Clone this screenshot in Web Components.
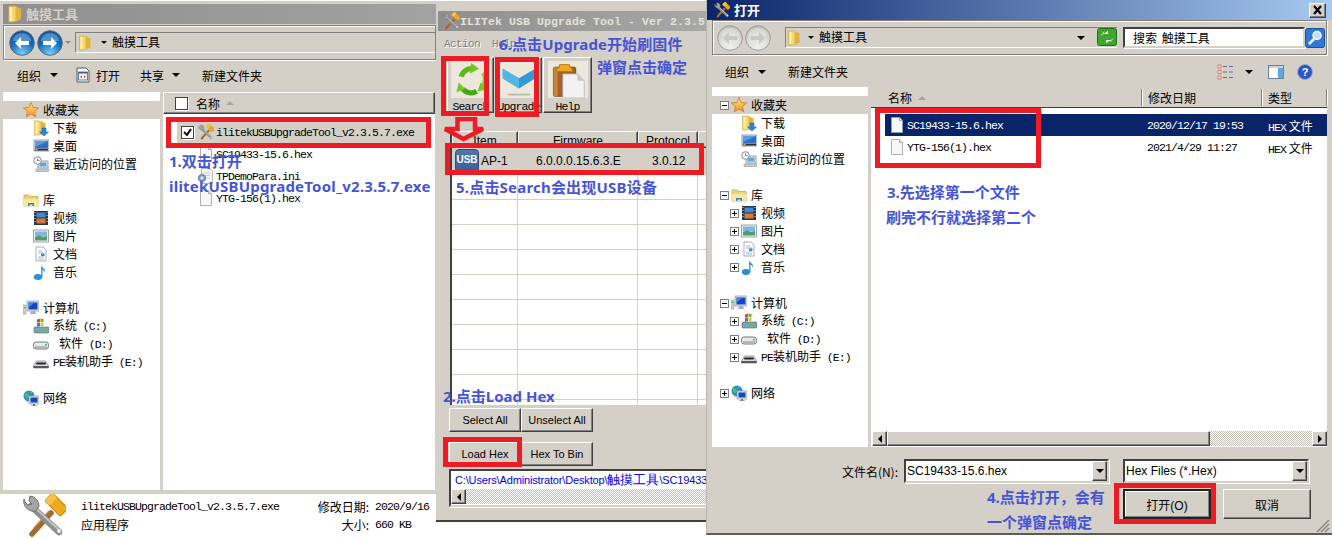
<!DOCTYPE html>
<html lang="zh">
<head>
<meta charset="utf-8">
<title>触摸工具</title>
<style>
  html, body { margin: 0; padding: 0; background: #fff; }
  body {
    position: relative;
    width: 1332px;
    height: 538px;
    overflow: hidden;
    font: 12px "Noto Sans CJK SC", "Liberation Sans", sans-serif;
    color: #000;
  }
</style>
</head>
<body>
<explorer-window></explorer-window>
<tool-window></tool-window>
<open-dialog></open-dialog>

<red-box x="166" y="117" w="265" h="31"></red-box>
<red-box x="441" y="56" w="48" h="60"></red-box>
<red-box x="495" y="57" w="44" h="60"></red-box>
<red-arrow></red-arrow>
<red-box x="445" y="143" w="259" h="32"></red-box>
<red-box x="443" y="437" w="79" h="30"></red-box>
<red-box x="875" y="108" w="166" h="60"></red-box>
<red-box x="1114" y="483" w="102" h="41"></red-box>

<step-note x="169" y="151">1.双击打开</step-note>
<step-note x="169" y="176" style="letter-spacing:.21px">ilitekUSBUpgradeTool_v2.3.5.7.exe</step-note>
<step-note x="443" y="386">2.点击Load Hex</step-note>
<step-note x="887" y="182">3.先选择第一个文件</step-note>
<step-note x="886" y="207">刷完不行就选择第二个</step-note>
<step-note x="987" y="487">4.点击打开，会有</step-note>
<step-note x="987" y="512">一个弹窗点确定</step-note>
<step-note x="456" y="177" style="letter-spacing:.2px">5.点击Search会出现USB设备</step-note>
<step-note x="499" y="34" style="letter-spacing:.1px">6.点击Upgrade开始刷固件</step-note>
<step-note x="597" y="57">弹窗点击确定</step-note>

<script>
// shared bits of style, every shadow root gets its own copy
const MONO = `.m { font-family: "Liberation Mono", monospace; font-size: 11.5px; letter-spacing: -0.9px; }`;
const RAISED = `background: #d4d0c8; box-sizing: border-box;
  border: 1px solid; border-color: #fff #404040 #404040 #fff; box-shadow: inset -1px -1px 0 #808080;`;
const INSET = `box-sizing: border-box; background: #fff; border: 2px solid; border-color: #404040 #d4d0c8 #d4d0c8 #404040; box-shadow: 1px 1px 0 #fff;`;
const ETCHED = `box-sizing: border-box; border: 1px solid #808080; box-shadow: inset 1px 1px 0 #fff, 1px 1px 0 #fff;`;

const FOLDER = `<g transform="translate(-1.500 0)"><path d="M3 1h6l2 1v12l-4 1H3z" fill="#f6d873" stroke="#c9a33c" stroke-width=".6"/><path d="M9 2l5 1v10l-5 1z" fill="#e2b23f"/><path d="M4 2h2v12H4z" fill="#fff0b0"/></g>`;
const SCREEN = `<rect x="1" y="2" width="15" height="11" fill="#dfe6ee" stroke="#7a8a9c" stroke-width=".8"/><rect x="2" y="3" width="13" height="7" fill="#2f6fc4"/><path d="M2 3h13L2 9z" fill="#5d9ae0"/><rect x="2" y="10.500" width="13" height="2" fill="#26303c"/><rect x="2.500" y="11" width="2" height="1" fill="#e8b23c"/>`;
const MONITOR = `<rect x="4" y="1" width="12" height="10" fill="#dfe3e8" stroke="#8a939e" stroke-width=".7"/><rect x="5.500" y="2.500" width="9" height="7" fill="#1746b8"/><path d="M5.500 2.500h6l-6 5z" fill="#4d86e8"/><path d="M8 11h4l1 3H7z" fill="#a9aeb4"/><rect x="0.500" y="5" width="2.500" height="9" fill="#c9ced4" stroke="#7f868d" stroke-width=".4"/><rect x="1" y="7" width="1.500" height="1" fill="#4ab04a"/>`;
const HAMMER = `<g transform="rotate(45 34 11)"><rect x="23" y="5" width="22" height="11" rx="2" fill="#f0a81c" stroke="#c47f10"/><rect x="23" y="5" width="7" height="11" rx="2" fill="#f7c24a"/></g>
  <path d="M10 40L29 19" stroke="#a5692c" stroke-width="5.500" stroke-linecap="round"/><path d="M12 34L27 17" stroke="#c98a44" stroke-width="1.500"/>
  <path d="M9 12L37 38" stroke="#8f8f8f" stroke-width="6.500" stroke-linecap="round"/><path d="M9 10L37 36" stroke="#c4c4c4" stroke-width="2"/>
  <path d="M2 5a10 10 0 0 0 12 12l3-5a10 10 0 0 0-9-10l-1 5 3 3-4 1-3-3z" fill="#a4a4a4" stroke="#6f6f6f"/><circle cx="37" cy="37" r="2" fill="#eee"/>`;

// 16x16 unless BIG says otherwise
const ICONS = {
  folder: FOLDER,
  star: `<defs><linearGradient id="s" x1="0" y1="0" x2="0" y2="1"><stop offset="0" stop-color="#ffe680"/><stop offset="1" stop-color="#f29420"/></linearGradient></defs><path d="M8 .500l2.200 5 5.300.5-4 3.500 1.200 5.300L8 12l-4.700 2.800 1.200-5.300-4-3.500 5.300-.5z" fill="url(#s)" stroke="#d2761c" stroke-width=".8"/>`,
  download: FOLDER + `<path d="M9 8h4v4h2.500L11 16l-4.500-4H9z" fill="#2b86d8" stroke="#17589c" stroke-width=".5"/>`,
  desktop: SCREEN,
  recent: `<rect x="5" y="5" width="10" height="7" fill="#e2ebf2" stroke="#7d8a94" stroke-width=".8"/><rect x="6.500" y="6.500" width="7" height="4" fill="#69a4d8"/><rect x="3" y="13" width="13" height="2.500" fill="#c6ccd2" stroke="#828a92" stroke-width=".5"/><circle cx="4.500" cy="4.500" r="3.800" fill="#f4f4f4" stroke="#8f8f8f"/><path d="M4.500 2.500v2h2" fill="none" stroke="#666" stroke-width=".8"/>`,
  library: `<path d="M1 3h5l1 1.500h8V14H1z" fill="#f2d372" stroke="#c29c3c" stroke-width=".7"/><path d="M1 7h14v7H1z" fill="#fae7a0"/><path d="M5 14v-3h6v3h-1.500v-1.500h-3V14z" fill="#2f86cc"/>`,
  video: `<rect x="1" y="1" width="14" height="14" fill="#2a3440"/><rect x="3.500" y="2.500" width="9" height="5" fill="#3f8ad4"/><rect x="3.500" y="8.500" width="9" height="5" fill="#d87a3a"/><path d="M1.500 2.500h1m-1 3h1m-1 3h1m-1 3h1m11-9h1m-1 3h1m-1 3h1m-1 3h1" stroke="#dfe6ee"/>`,
  picture: `<rect x="0.500" y="2" width="15" height="12" fill="#eef1f4" stroke="#87919c" stroke-width=".8"/><rect x="2" y="3.500" width="12" height="5" fill="#7fb6e8"/><path d="M2 12.500V9l4-1.500 4 1.500 4-1v4.500z" fill="#4f9c68"/>`,
  doc: `<path d="M3 1h7l3 3v11H3z" fill="#fff" stroke="#8d9aae" stroke-width=".8"/><path d="M5 5h4M5 7h6M5 11h6M5 13h6" stroke="#8fa4c8" stroke-width=".8"/><rect x="8" y="7.500" width="3.500" height="2.500" fill="#3f8ad4"/>`,
  music: `<ellipse cx="5" cy="13" rx="4.200" ry="3" fill="#2c8ed8"/><path d="M8.200 13V1c.5 3 4.800 3.500 3.800 8-.5-2.500-2-3-2.500-3.500V13z" fill="#2c8ed8"/>`,
  computer: MONITOR,
  sysdrive: `<rect x="1" y="9" width="15" height="6" rx="1" fill="#7ea4ac" stroke="#566c72" stroke-width=".6"/><rect x="12" y="11.500" width="2" height="1.500" fill="#4fc04f"/><path d="M4 1.500l3-1v3.500l-3 1z" fill="#e0492e"/><path d="M7.500 .5l3 .5v3.500l-3-.5z" fill="#6ab82e"/><path d="M4 5.500l3-1V8l-3 1z" fill="#2e7fe0"/><path d="M7.500 4.500l3 .5V8.500l-3-.5z" fill="#f2c22e"/>`,
  drive: `<rect x="0.500" y="6" width="15" height="7" rx="2.500" fill="#e6e8ea" stroke="#777c82"/><rect x="2" y="10" width="12" height="2" fill="#b4b8bd"/><rect x="12" y="8" width="2" height="1.500" fill="#4fc04f"/>`,
  removable: `<path d="M.5 12l3-5h9l3 5v2H.5z" fill="#d9dbde" stroke="#777c82" stroke-width=".7"/><rect x="3" y="8.500" width="10" height="2" rx="1" fill="#26282c"/><rect x="0.500" y="12" width="15" height="2" fill="#55585c"/>`,
  network: `<circle cx="6" cy="6" r="5.500" fill="#2c8ed8"/><path d="M2 3c2-1 3 1 4 2s-1 3-2 3-3-2-2-5zM7 1c2 0 3 1 2 2L7 3z" fill="#4cc04c"/><rect x="6" y="6" width="10" height="8" fill="#dfe3e8" stroke="#7b8794" stroke-width=".6"/><rect x="7.500" y="7.500" width="7" height="5" fill="#1746b8"/><path d="M10 14h2v1.500h2v.5H8v-.5h2z" fill="#6d7882"/>`,
  tools: HAMMER,
  hex: `<path d="M2.500 .5h8l3 3v12h-11z" fill="#f7f7f7" stroke="#9aa0a8" stroke-width=".8"/><path d="M10.500 .5v3h3" fill="#dcdfe2" stroke="#9aa0a8" stroke-width=".8"/>`,
  ini: `<path d="M3.500 .5h8l3 3v12h-11z" fill="#f7f7f7" stroke="#9aa0a8" stroke-width=".8"/><path d="M5 5h7M5 7.500h7M5 10h7" stroke="#b9bec6" stroke-width=".7"/><circle cx="4" cy="10" r="3.500" fill="#8daad4" stroke="#4f6c9c"/><circle cx="4" cy="10" r="1.200" fill="#fff"/>`,
  open: `<path d="M2 1h9l3 3v11H2z" fill="#fff" stroke="#555" stroke-width="1"/><rect x="3.500" y="5" width="9" height="8" fill="#f2f2f2" stroke="#3b5e9c" stroke-width=".8"/><rect x="3.500" y="5" width="9" height="1.500" fill="#3b5e9c"/><path d="M5 10l2-1.500V11zM11 10L9 8.500V11z" fill="#c23b2e"/>`,
  recycle: `<g fill="none" stroke-width="6.500"><path d="M9 17a13 13 0 0 1 14-10" stroke="#5cb81e"/><path d="M36 12a13 13 0 0 1-1 17" stroke="#8ed42c"/><path d="M28 35a13 13 0 0 1-17-3" stroke="#4aa614"/></g><path d="M21 0l10 7-11 6zM41 33l-12 2 4-11zM3 36l3-12 8 8z" fill="#76c622"/>`,
  chevron: `<path d="M2 8l19 11 19-11v11L21 31 2 19z" fill="#2f9ad6"/><path d="M2 8l19 11v12L2 19z" fill="#56b4e4"/><rect x="8" y="37" width="26" height="2" fill="#b9b9b0"/>`,
  clipboard: `<rect x="4" y="6" width="26" height="34" rx="2" fill="#a4622a" stroke="#6f4016"/><rect x="4" y="6" width="5" height="34" fill="#c4843c"/><path d="M11 3h12v3l3 2v3H8V8l3-2z" fill="#f0a81c" stroke="#b87a10"/><path d="M15 14h17l8 8v20H15z" fill="#f2f2f2" stroke="#b9b9b9"/><path d="M32 14v8h8z" fill="#c8c8c8"/>`,
  refresh: `<rect x=".5" y=".5" width="19" height="17" rx="2" fill="#3fa62e" stroke="#1f6e18"/><path d="M3 8l4-4v2h4V3zM17 10l-4 4v-2H9v3z" fill="#fff"/>`,
  lens: `<rect x=".5" y=".5" width="19" height="19" rx="2" fill="#2f78d8" stroke="#1b4e9c"/><circle cx="12" cy="7.500" r="4" fill="#bcdcf8" stroke="#fff" stroke-width="1.500"/><path d="M9 11l-5 5" stroke="#fff" stroke-width="2.500"/>`,
  views: `<path d="M1 1h3v3H1zM1 6.500h3v3H1zM1 12h3v3H1z" fill="#fff" stroke="#c24a3a" stroke-width=".7"/><path d="M6 2.500h4M6 8h4M6 13.500h4M12 2.500h4M12 8h4M12 13.500h4" stroke="#5a7296" stroke-width="1.200"/>`,
  pane: `<rect x=".5" y="1.500" width="15" height="13" fill="#fff" stroke="#6d8098"/><rect x="10" y="2" width="5" height="12" fill="#5fa8d8"/><rect x="1" y="2" width="14" height="2" fill="#c9d6e2"/>`,
  help: `<circle cx="8" cy="8" r="7.500" fill="#2c56c8" stroke="#9aa8c4"/><text x="8" y="12" font-size="11" font-weight="700" font-family="Liberation Sans" text-anchor="middle" fill="#fff">?</text>`
};
const BIG = { tools: 44, recycle: 42, chevron: 42, clipboard: 42, refresh: 20, lens: 20 };

class WinIcon extends HTMLElement {
  connectedCallback() {
    const name = this.getAttribute('name');
    const size = this.getAttribute('size') || 16;
    const box = BIG[name] || 16;
    this.attachShadow({ mode: 'open' }).innerHTML = `
      <style>:host { display: inline-block; flex: none; width: ${size}px; height: ${size}px; line-height: 0; }</style>
      <svg width="${size}" height="${size}" viewBox="0 0 ${box} ${box}">${ICONS[name] || ''}</svg>`;
  }
}
customElements.define('win-icon', WinIcon);

class RedBox extends HTMLElement {
  connectedCallback() {
    const a = n => this.getAttribute(n);
    this.attachShadow({ mode: 'open' }).innerHTML = `
      <style>:host { position: absolute; left: ${a('x')}px; top: ${a('y')}px; width: ${a('w')}px; height: ${a('h')}px;
        box-sizing: border-box; border: 5px solid #ed1c24; }</style>`;
  }
}
customElements.define('red-box', RedBox);

class RedArrow extends HTMLElement {
  constructor() {
    super();
    this.attachShadow({ mode: 'open' }).innerHTML = `
      <style>:host { position: absolute; left: 440px; top: 117px; width: 48px; height: 26px; line-height: 0; }</style>
      <svg width="48" height="26"><path d="M17.500 2H35V12H43L23.500 22 5 12H17.500Z" fill="none" stroke="#ed1c24" stroke-width="4.500"/></svg>`;
  }
}
customElements.define('red-arrow', RedArrow);

class StepNote extends HTMLElement {
  connectedCallback() {
    this.attachShadow({ mode: 'open' }).innerHTML = `
      <style>:host { position: absolute; left: ${this.getAttribute('x')}px; top: ${this.getAttribute('y')}px;
        font: 700 15px/20px "Noto Sans", "Noto Sans CJK SC", sans-serif; color: #4654d8; white-space: nowrap; }</style>
      <slot></slot>`;
  }
}
customElements.define('step-note', StepNote);

class RaisedBtn extends HTMLElement {
  constructor() {
    super();
    this.attachShadow({ mode: 'open' }).innerHTML = `
      <style>:host { ${RAISED} display: flex; align-items: center; justify-content: center; overflow: hidden; white-space: nowrap; }
      :host([default]) { border: 2px solid #222; box-shadow: inset -1px -1px 0 #808080, inset 1px 1px 0 #fff; }</style>
      <slot></slot>`;
  }
}
customElements.define('raised-btn', RaisedBtn);

class NavOrb extends HTMLElement {
  connectedCallback() {
    const off = this.hasAttribute('off');
    const flip = this.getAttribute('dir') === 'next' ? 'matrix(-1 0 0 1 26 0)' : '';
    const [a, b] = off ? ['#f2f2f0', '#bdbdb8'] : ['#7fd0f4', '#0a4f9c'];
    const ink = off ? '#c8c8c4' : '#fff';
    this.attachShadow({ mode: 'open' }).innerHTML = `
      <style>:host { display: block; flex: none; width: 26px; height: 26px; line-height: 0; }</style>
      <svg width="26" height="26" viewBox="0 0 26 26">
        <defs><radialGradient id="o" cx=".5" cy=".95" r=".95"><stop offset="0" stop-color="${a}"/><stop offset=".55" stop-color="${off ? '#dcdcd8' : '#1470c0'}"/><stop offset="1" stop-color="${b}"/></radialGradient></defs>
        <circle cx="13" cy="13" r="12.300" fill="url(#o)" stroke="${off ? '#9a9a96' : '#596a7c'}"/>
        <path d="M4 11a9 8 0 0 1 18 0z" fill="#fff" opacity=".28"/>
        <path transform="${flip}" d="M6 13l6-6v4h8v4h-8v4z" fill="${ink}"/>
      </svg>`;
  }
}
customElements.define('nav-orb', NavOrb);

const TREE = [
  { i: 'star', t: '收藏夹', x: '-', hl: 1 },
  { i: 'download', t: '下载', c: 1 },
  { i: 'desktop', t: '桌面', c: 1 },
  { i: 'recent', t: '最近访问的位置', c: 1 },
  { i: 'library', t: '库', x: '-', gap: 1 },
  { i: 'video', t: '视频', c: 1, x: '+' },
  { i: 'picture', t: '图片', c: 1, x: '+' },
  { i: 'doc', t: '文档', c: 1, x: '+' },
  { i: 'music', t: '音乐', c: 1, x: '+' },
  { i: 'computer', t: '计算机', x: '-', gap: 1 },
  { i: 'sysdrive', t: '系统 <span class="m drv">(C:)</span>', c: 1, x: '+' },
  { i: 'drive', t: '<span class="sp">软件</span> <span class="m drv">(D:)</span>', c: 1, x: '+' },
  { i: 'removable', t: '<span class="m">PE</span>装机助手 <span class="m drv">(E:)</span>', c: 1, x: '+' },
  { i: 'network', t: '网络', x: '+', gap: 1 }
];

class NavTree extends HTMLElement {
  connectedCallback() {
    const boxes = this.hasAttribute('expanders');
    const rows = TREE.map(r => {
      const box = boxes
        ? `<span class="x ${r.x ? '' : 'none'}">${r.x === '+' ? '<i class="v"></i>' : ''}<i class="h"></i></span>`
        : '';
      const pad = (r.c ? 10 : 0) + (boxes ? 8 : 20);
      return `<div class="row ${r.hl ? 'hl' : ''} ${r.gap ? 'gap' : ''}" style="padding-left:${pad}px">${box}
        <win-icon name="${r.i}" size="16"></win-icon><span class="t">${r.t}</span></div>`;
    }).join('');
    this.attachShadow({ mode: 'open' }).innerHTML = `
      <style>
        :host { display: block; background: #fff; padding-top: 9px; overflow: hidden; }
        ${MONO}
        .row { display: flex; align-items: center; height: 18px; white-space: nowrap; }
        .hl { background: #d4d0c8; }
        .gap { margin-top: 18px; }
        .t { margin-left: 4px; line-height: 18px; }
        .drv { margin-left: 3px; }
        .sp { margin-left: 6px; }
        .x { position: relative; box-sizing: border-box; flex: none; width: 9px; height: 9px; margin-right: 2px; border: 1px solid #808080; background: #fff; }
        .x.none { visibility: hidden; }
        .x i { position: absolute; background: #000; }
        .x .h { left: 1px; top: 3px; width: 5px; height: 1px; }
        .x .v { left: 3px; top: 1px; width: 1px; height: 5px; }
      </style>${rows}`;
  }
}
customElements.define('nav-tree', NavTree);

class ScrollBar extends HTMLElement {
  connectedCallback() {
    const thumb = this.getAttribute('thumb');
    this.attachShadow({ mode: 'open' }).innerHTML = `
      <style>
        :host { display: flex; flex: none; height: 15px; background: repeating-conic-gradient(#c4c0b8 0 25%, #fff 0 50%) 0 0 / 2px 2px; overflow: hidden; }
        .b { ${RAISED} flex: none; width: 15px; display: flex; align-items: center; justify-content: center; }
        .thumb { ${RAISED} flex: none; width: ${thumb}px; }
        .fill { flex: 1; }
        i { width: 0; height: 0; border: 4px solid transparent; }
        .l i { border-right-color: #000; border-left: 0; }
        .r i { border-left-color: #000; border-right: 0; }
      </style>
      <div class="b l"><i></i></div>
      ${thumb ? '<div class="thumb"></div><div class="fill"></div><div class="b r"><i></i></div>' : ''}`;
  }
}
customElements.define('scroll-bar', ScrollBar);

class ComboField extends HTMLElement {
  constructor() {
    super();
    this.attachShadow({ mode: 'open' }).innerHTML = `
      <style>
        :host { ${INSET} display: flex; align-items: center; height: 24px; font: 12px "Liberation Sans", sans-serif; }
        .v { flex: 1; padding-left: 1px; white-space: nowrap; overflow: hidden; }
        .b { ${RAISED} width: 15px; height: 20px; display: flex; align-items: center; justify-content: center; }
        i { border: 4px solid transparent; border-top-color: #000; border-bottom: 0; }
      </style>
      <div class="v"><slot></slot></div><div class="b"><i></i></div>`;
  }
}
customElements.define('combo-field', ComboField);

const WIN_CSS = `
  ${MONO}
  .title { display: flex; align-items: center; box-sizing: border-box; height: 20px; font-weight: 700; font-size: 13px; color: #d4d0c8; white-space: nowrap; overflow: hidden; }
  .up { padding-bottom: 2px; }
  .strip { ${ETCHED} display: flex; align-items: center; height: 35px; }
  .addr { display: flex; align-items: center; height: 21px; border-top: 1px solid #808080; border-left: 1px solid #808080; border-bottom: 1px solid #fff; box-sizing: border-box; }
  .tri { flex: none; border: 4px solid transparent; border-top-color: #000; border-bottom: 0; }
  .tri.s { border-width: 3px; border-bottom: 0; }
  .bar { display: flex; align-items: center; height: 31px; white-space: nowrap; }
  .head { ${RAISED} display: flex; align-items: center; height: 22px; flex: none; }
  .sort { border: 4px solid transparent; border-bottom-color: #a8a49c; border-top: 0; }
`;

class ExplorerWindow extends HTMLElement {
  constructor() {
    super();
    this.attachShadow({ mode: 'open' }).innerHTML = `
      <style>
        ${WIN_CSS}
        :host { position: absolute; left: 0; top: 0; width: 706px; height: 538px; box-sizing: border-box; background: #d4d0c8;
          display: flex; flex-direction: column; padding: 3px 270px 0 3px; border-top: 1px solid #fff; }
        .title { flex: none; background: linear-gradient(90deg, #8f8f8f, #a2a2a2); padding-left: 4px; }
        .title span { margin-left: 1px; }
        .strip { flex: none; margin-top: 1px; padding-left: 5px; }
        .addr { flex: 1; margin-left: 4px; padding-left: 2px; align-self: center; }
        .bar { flex: none; height: 32px; padding-bottom: 2px; box-sizing: border-box; }
        .bar > * { flex: none; }
        .panes { flex: 1; display: grid; grid-template-columns: 157px 1fr; column-gap: 3px; min-height: 0; padding-right: 1px; }
        .list { background: #fff; min-width: 0; }
        .file { display: flex; align-items: center; height: 22px; padding-left: 35px; white-space: nowrap; }
        .file .m { margin-left: 2px; }
        .file.sel { background: #d4d0c8; margin: 7px 0 0 14px; padding-left: 4px; width: 254px; box-sizing: border-box; }
        .chk { ${INSET} flex: none; width: 13px; height: 13px; border-width: 1px; border-color: #404040; margin-right: 4px; display: block; line-height: 0; }
        .status { flex: none; display: flex; height: 44px; margin: 4px -270px 0 -3px; background: #fff; }
        .status .tx { display: grid; grid-template-columns: 236px 52px auto; align-content: start; margin: 4px 0 0 15px; line-height: 18px; white-space: nowrap; }
        .status .r { text-align: right; }
        .status .d { margin-left: 6px; }
      </style>
      <div class="title"><win-icon name="folder" size="18"></win-icon><span class="up">触摸工具</span></div>
      <div class="strip">
        <nav-orb dir="prev"></nav-orb><nav-orb dir="next" style="margin-left:2px"></nav-orb>
        <div class="tri s" style="border-top-color:#888;margin-left:2px"></div>
        <div class="addr"><win-icon name="folder" size="16"></win-icon><div class="tri s" style="margin:0 5px 0 7px"></div><span class="up">触摸工具</span></div>
      </div>
      <div class="bar">
        <span style="margin-left:14px">组织</span><div class="tri" style="margin-left:9px"></div>
        <win-icon name="open" size="16" style="margin-left:17px"></win-icon><span style="margin-left:5px">打开</span>
        <span style="margin-left:20px">共享</span><div class="tri" style="margin-left:8px"></div>
        <span style="margin-left:22px">新建文件夹</span>
      </div>
      <div class="panes">
        <nav-tree></nav-tree>
        <div class="list">
          <div class="head" style="padding-left:11px">
            <span class="chk"></span><span style="margin-left:4px">名称</span><div class="sort" style="margin-left:6px"></div>
          </div>
          <div class="file sel">
            <span class="chk"><svg width="11" height="11"><path d="M2 5l3 3 4-6" fill="none" stroke="#000" stroke-width="2"/></svg></span>
            <win-icon name="tools" size="16"></win-icon><span class="m">ilitekUSBUpgradeTool_v2.3.5.7.exe</span>
          </div>
          <div class="file"><win-icon name="hex" size="16"></win-icon><span class="m">SC19433-15.6.hex</span></div>
          <div class="file"><win-icon name="ini" size="16"></win-icon><span class="m">TPDemoPara.ini</span></div>
          <div class="file"><win-icon name="hex" size="16"></win-icon><span class="m">YTG-156(1).hex</span></div>
        </div>
      </div>
      <div class="status">
        <win-icon name="tools" size="44" style="margin-left:22px"></win-icon>
        <div class="tx">
          <span class="m">ilitekUSBUpgradeTool_v2.3.5.7.exe</span><span class="r">修改日期:</span><span class="m d">2020/9/16</span>
          <span>应用程序</span><span class="r">大小:</span><span class="m d">660 KB</span>
        </div>
      </div>`;
  }
}
customElements.define('explorer-window', ExplorerWindow);

class ToolWindow extends HTMLElement {
  constructor() {
    super();
    const row = '<div class="c"></div><div class="c"></div><div class="c"></div><div class="c"></div>';
    this.attachShadow({ mode: 'open' }).innerHTML = `
      <style>
        ${WIN_CSS}
        :host { position: absolute; left: 436px; top: 10px; width: 270px; height: 512px; box-sizing: border-box; background: #d4d0c8;
          padding: 1px 0 0 2px; border-bottom: 2px solid #404040; overflow: hidden; display: flex; flex-direction: column;
          font: 11px "Liberation Sans", sans-serif; }
        .title { flex: none; background: linear-gradient(90deg, #8f8f8f, #a8a8a8); padding-left: 4px; }
        .title .m { font-weight: 700; font-size: 11.500px; letter-spacing: .1px; color: #e4e1da; }
        .menu { display: flex; flex: none; height: 26px; align-items: center; padding-left: 6px; color: #808080; text-shadow: 1px 1px 0 #fff; }
        .menu .m { font-size: 11px; letter-spacing: -.6px; }
        .tools { display: flex; flex: none; gap: 1px; height: 56px; margin-left: 9px; }
        .tb { ${RAISED} width: 47px; height: 56px; display: flex; flex-direction: column; align-items: center; overflow: hidden; padding-top: 3px; }
        .tb .pic { flex: none; width: 40px; height: 37px; background: #ece8dc; display: flex; align-items: center; justify-content: center; }
        .tb .m { margin-top: 2px; line-height: 13px; white-space: nowrap; }
        .grid { flex: none; display: grid; grid-template-columns: 66px 120px 60px 10px; grid-template-rows: 17px 27px repeat(10, 25px); height: 274px;
          margin: 18px 0 0 12px; background: #fff; border-left: 2px solid #404040; box-sizing: border-box; overflow: hidden; font-size: 12px; }
        .h { ${RAISED} text-align: center; line-height: 14px; padding-top: 2px; overflow: hidden; }
        .c { box-sizing: border-box; border-right: 1px solid #d4d0c8; border-bottom: 1px solid #d4d0c8; white-space: nowrap; }
        .cur { background: #d4d0c8; display: flex; align-items: center; }
        .btns { display: grid; flex: none; grid-template-columns: 72px 72px; margin-left: 11px; }
        .btns raised-btn { height: 24px; }
        .path { ${INSET} flex: none; display: flex; flex-direction: column; margin: 3px 0 0 11px; height: 38px; border-right: 0; overflow: hidden; }
        .path .p { flex: none; color: #0000f0; font-size: 11px; letter-spacing: -.15px; line-height: 18px; padding: 0 0 0 4px; white-space: nowrap; }
        .path span { font-size: 12.500px; letter-spacing: 0; }
        .usb { width: 24px; height: 24px; margin-left: 3px; flex: none; border-radius: 4px; border: 1px solid #2d4f80; box-sizing: border-box;
          background: linear-gradient(#4f76ac, #3a5f94); color: #fff; font: 700 10px/19px "Liberation Sans", sans-serif; text-align: center; }
      </style>
      <div class="title"><win-icon name="tools" size="18"></win-icon><span class="m">ILITek USB Upgrade Tool - Ver 2.3.5</span></div>
      <div class="menu"><span class="m">Action</span><span class="m" style="margin-left:12px">Help</span></div>
      <div class="tools">
        <div class="tb"><div class="pic"><win-icon name="recycle" size="34"></win-icon></div><span class="m">Search</span></div>
        <div class="tb"><div class="pic"><win-icon name="chevron" size="36"></win-icon></div><span class="m">Upgrade</span></div>
        <div class="tb" style="width:49px"><div class="pic"><win-icon name="clipboard" size="36"></win-icon></div><span class="m">Help</span></div>
      </div>
      <div class="grid">
        <div class="h">Item</div><div class="h">Firmware</div><div class="h">Protocol</div><div class="h"></div>
        <div class="c cur"><div class="usb">USB</div><span style="margin-left:2px">AP-1</span></div>
        <div class="c cur" style="padding-left:18px">6.0.0.0.15.6.3.E</div>
        <div class="c cur" style="padding-left:14px">3.0.12</div>
        <div class="c cur"></div>
        ${row.repeat(10)}
      </div>
      <div class="btns" style="margin-top:3px"><raised-btn>Select All</raised-btn><raised-btn>Unselect All</raised-btn></div>
      <div class="btns" style="margin-top:10px"><raised-btn>Load Hex</raised-btn><raised-btn>Hex To Bin</raised-btn></div>
      <div class="path"><div class="p">C:\\Users\\Administrator\\Desktop\\<span>触摸工具</span>\\SC19433</div><scroll-bar></scroll-bar></div>`;
  }
}
customElements.define('tool-window', ToolWindow);

class OpenDialog extends HTMLElement {
  constructor() {
    super();
    this.attachShadow({ mode: 'open' }).innerHTML = `
      <style>
        ${WIN_CSS}
        :host { position: absolute; left: 706px; top: 0; width: 626px; height: 535px; box-sizing: border-box; background: #d4d0c8;
          padding: 0 5px 0 5px; border-bottom: 2px solid #5c5c5c; border-left: 1px solid #b8b5ae; display: flex; flex-direction: column; }
        .title { flex: none; background: linear-gradient(90deg, #0a246a, #a6caf0); margin: 0 -5px; padding-left: 7px; color: #fff; height: 20px; }
        .title span { margin-left: 4px; flex: 1; }
        .close { ${RAISED} width: 17px; height: 15px; margin-right: 6px; display: flex; align-items: center; justify-content: center; line-height: 0; }
        .strip { padding-left: 4px; flex: none; }
        .addr { margin-left: 14px; width: 332px; padding-left: 1px; flex: none; }
        .search { ${INSET} display: flex; align-items: center; width: 182px; height: 21px; margin-left: 6px; padding-left: 8px; word-spacing: 2px; }
        .bar { flex: none; }
        .panes { flex: none; height: 360px; display: grid; grid-template-columns: 156px 1fr; column-gap: 3px; }
        .list { display: flex; flex-direction: column; background: #fff; min-width: 0; }
        .head { padding: 0; display: grid; grid-template-columns: 271px 120px 1fr; height: 21px; box-shadow: inset 0 -1px 0 #404040; border: 0; }
        .head div { display: flex; align-items: center; border-right: 1px solid #808080; box-shadow: 1px 0 0 #fff; padding-left: 6px; }
        .head div:first-child { padding-left: 17px; }
        .body { flex: 1; padding: 6px 0 0 14px; }
        .row { display: grid; grid-template-columns: 262px 120px 1fr; height: 22px; align-items: center; white-space: nowrap; }
        .row.sel { background: #0a246a; color: #fff; }
        .row .m { padding-top: 1px; }
        .row > span:first-child { display: flex; align-items: center; padding-left: 4px; }
        .row win-icon { margin-right: 2px; }
        .row .ty { margin-left: 1px; }
        scroll-bar { flex: none; margin: 0 0 1px 1px; }
        .form { flex: 1; position: relative; display: flex; flex-direction: column; padding-top: 12px; }
        .line { display: flex; align-items: center; }
        .lab { width: 186px; text-align: right; margin-right: 6px; font-family: "Noto Sans CJK SC", sans-serif; }
        .acts { display: flex; gap: 12px; margin: 6px 0 0 411px; }
        .acts raised-btn { width: 88px; height: 30px; font-family: "Liberation Sans", "Noto Sans CJK SC", sans-serif; }
        .grip { position: absolute; right: -3px; bottom: 0; line-height: 0; }
      </style>
      <div class="title"><win-icon name="tools" size="16"></win-icon><span class="up">打开</span>
        <div class="close"><svg width="11" height="10"><path d="M2 1l7 8M9 1L2 9" stroke="#000" stroke-width="2.200"/></svg></div></div>
      <div class="strip">
        <nav-orb dir="prev" off></nav-orb><nav-orb dir="next" off style="margin-left:2px"></nav-orb>
        <div class="addr"><win-icon name="folder" size="16"></win-icon><div class="tri s" style="margin:0 5px 0 5px"></div><span class="up" style="flex:1">触摸工具</span><div class="tri" style="margin-right:12px"></div><win-icon name="refresh" size="20"></win-icon></div>
        <div class="search">搜索 触摸工具</div><win-icon name="lens" size="20"></win-icon>
      </div>
      <div class="bar" style="margin-top:1px">
        <span style="margin-left:13px">组织</span><div class="tri" style="margin-left:9px"></div>
        <span style="margin-left:22px">新建文件夹</span>
        <win-icon name="views" size="16" style="margin-left:369px"></win-icon><div class="tri" style="margin-left:12px"></div>
        <win-icon name="pane" size="16" style="margin-left:15px"></win-icon><win-icon name="help" size="16" style="margin-left:13px"></win-icon>
      </div>
      <div class="panes">
        <nav-tree expanders></nav-tree>
        <div class="list">
          <div class="head"><div>名称<span class="sort" style="margin-left:6px"></span></div><div>修改日期</div><div>类型</div></div>
          <div class="body">
            <div class="row sel"><span><win-icon name="hex" size="16"></win-icon><span class="m">SC19433-15.6.hex</span></span><span class="m">2020/12/17 19:53</span><span class="ty"><span class="m">HEX</span> 文件</span></div>
            <div class="row"><span><win-icon name="hex" size="16"></win-icon><span class="m">YTG-156(1).hex</span></span><span class="m">2021/4/29 11:27</span><span class="ty"><span class="m">HEX</span> 文件</span></div>
          </div>
          <scroll-bar thumb="323"></scroll-bar>
        </div>
      </div>
      <div class="form">
        <div class="line">
          <span class="lab">文件名(N):</span><combo-field style="width:205px">SC19433-15.6.hex</combo-field>
          <combo-field style="width:186px;margin-left:14px">Hex Files (*.Hex)</combo-field>
        </div>
        <div class="acts"><raised-btn default>打开(O)</raised-btn><raised-btn>取消</raised-btn></div>
        <svg class="grip" width="14" height="14"><path d="M13 1L1 13M13 5L5 13M13 9L9 13" stroke="#808080" stroke-width="1.200"/></svg>
      </div>`;
  }
}
customElements.define('open-dialog', OpenDialog);
</script>
</body>
</html>
